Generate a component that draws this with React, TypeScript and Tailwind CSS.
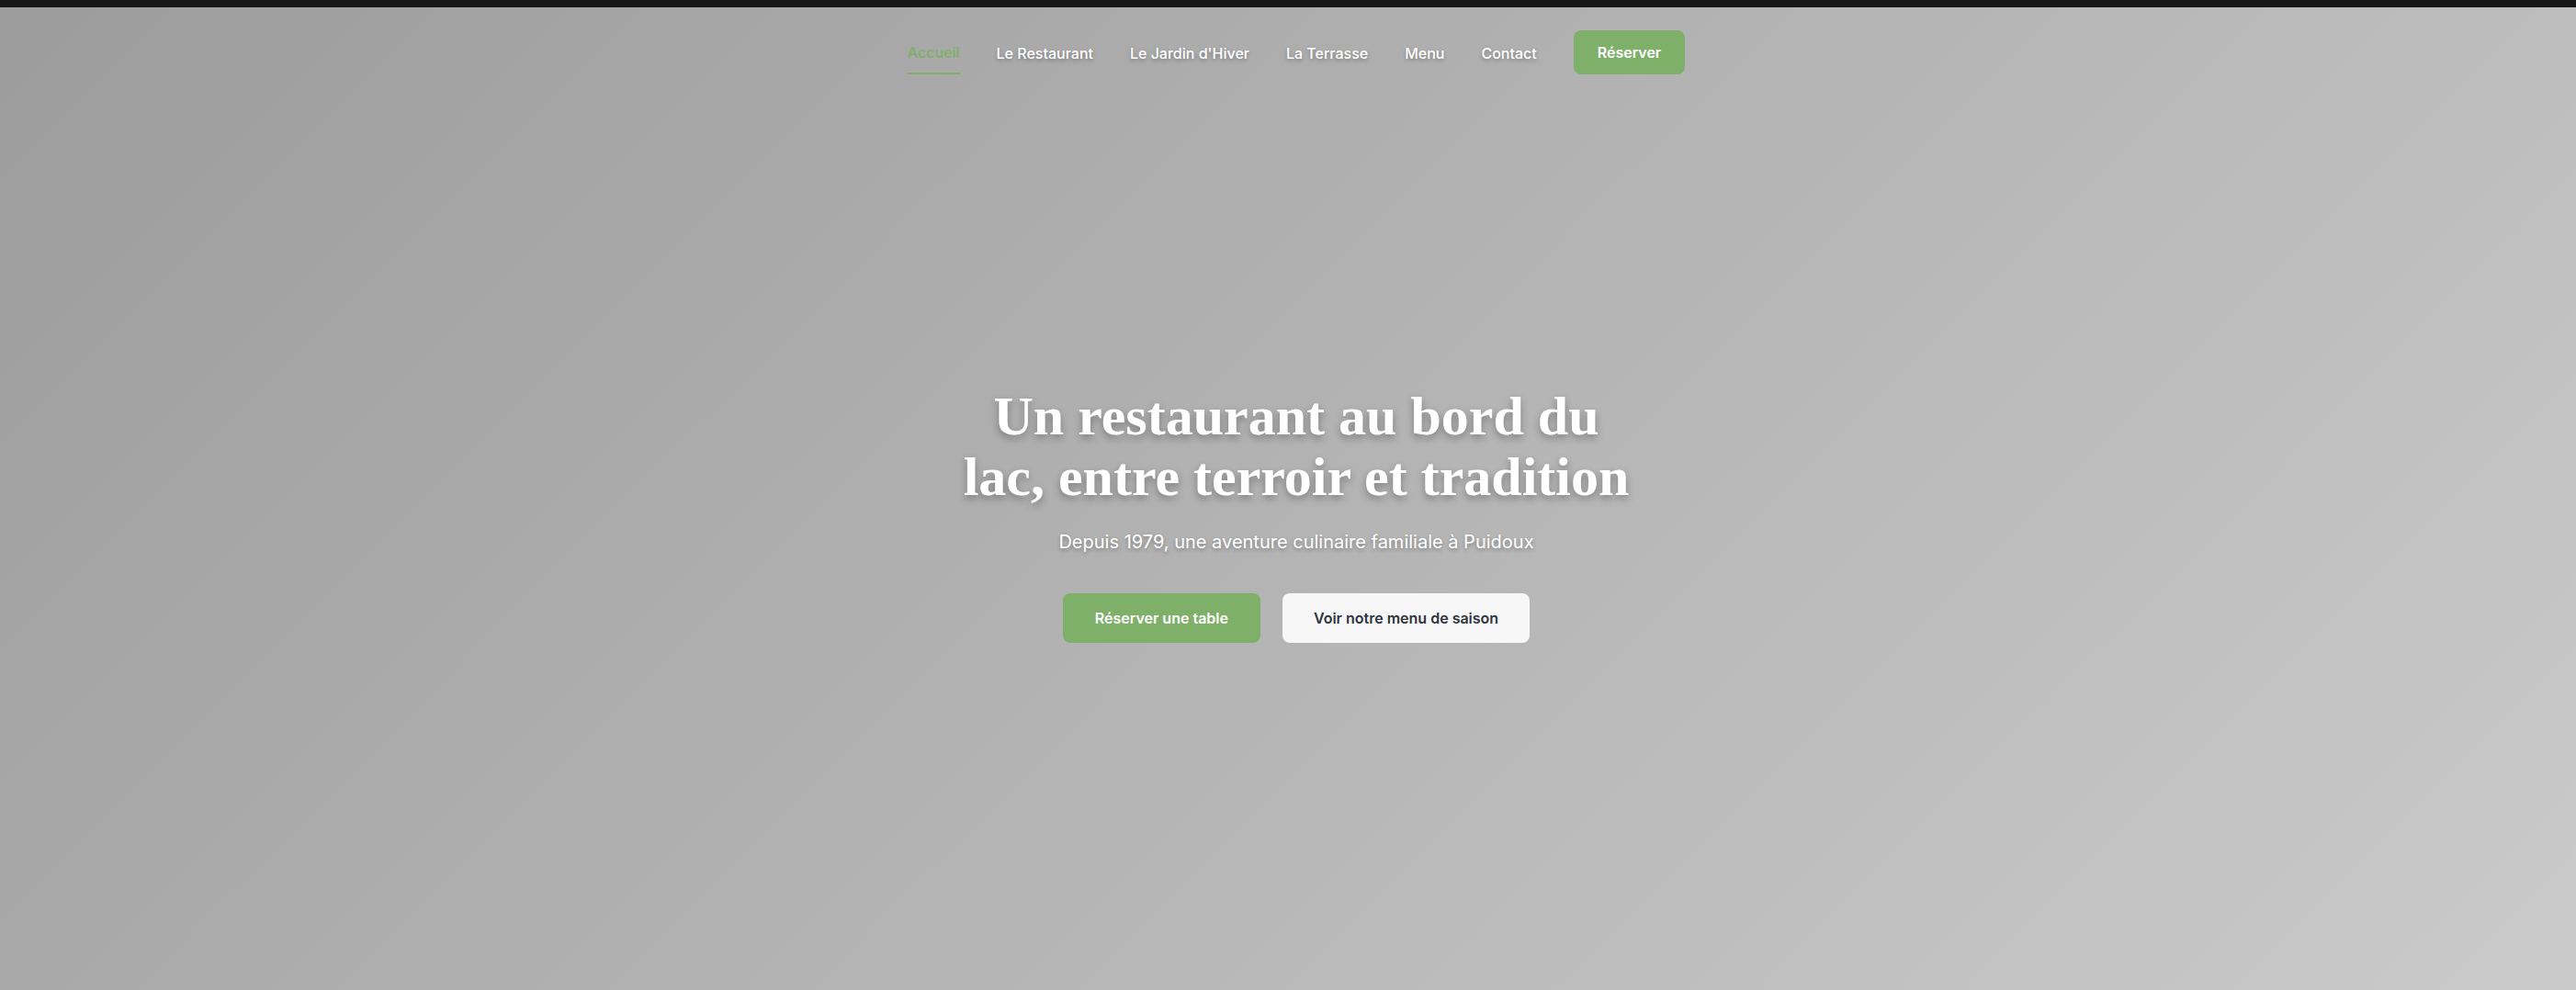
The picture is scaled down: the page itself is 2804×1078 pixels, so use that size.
const links = ["Accueil", "Le Restaurant", "Le Jardin d'Hiver", "La Terrasse", "Menu", "Contact"];

export default function App() {
  return (
    <div className="flex min-h-screen flex-col font-['Inter',sans-serif]">
      <div className="h-2 bg-[#171717]" />
      <div className="flex flex-1 flex-col bg-[linear-gradient(135deg,#9c9c9c,#cacaca)] pl-[18px]">
        {/* Nav */}
        <header className="flex justify-center pt-[25px]">
          <nav className="flex items-center gap-10">
            {links.map((l, i) => (
              <a
                key={l}
                href="#"
                className={
                  i === 0
                    ? "border-b-2 border-[#7eb06a] pb-[10px] pt-3 text-base font-medium text-[#7eb06a]"
                    : "pb-[10px] pt-3 text-base font-medium text-white [text-shadow:0_2px_4px_rgba(0,0,0,0.3)]"
                }
              >
                {l}
              </a>
            ))}
            <a
              href="#"
              className="rounded-lg bg-[#7eb06a] px-[26px] py-3 text-base font-semibold text-white"
            >
              Réserver
            </a>
          </nav>
        </header>

        {/* Hero */}
        <main className="flex flex-col items-center pt-[339px] text-center">
          <h1 className="max-w-[760px] font-['Liberation_Serif',serif] text-[60px] font-bold leading-[66px] text-white [text-shadow:0_4px_8px_rgba(0,0,0,0.3)]">
            Un restaurant au bord du lac, entre terroir et tradition
          </h1>
          <p className="mt-6 text-xl text-white [text-shadow:0_2px_4px_rgba(0,0,0,0.3)]">
            Depuis 1979, une aventure culinaire familiale à Puidoux
          </p>
          <div className="mt-[42px] flex gap-6">
            <a
              href="#"
              className="rounded-lg bg-[#7eb06a] px-[35px] py-[15px] text-base font-semibold text-white"
            >
              Réserver une table
            </a>
            <a
              href="#"
              className="rounded-lg bg-[#f7f7f7] px-[34px] py-[15px] text-base font-semibold text-[#2d3340]"
            >
              Voir notre menu de saison
            </a>
          </div>
        </main>
      </div>
    </div>
  );
}
